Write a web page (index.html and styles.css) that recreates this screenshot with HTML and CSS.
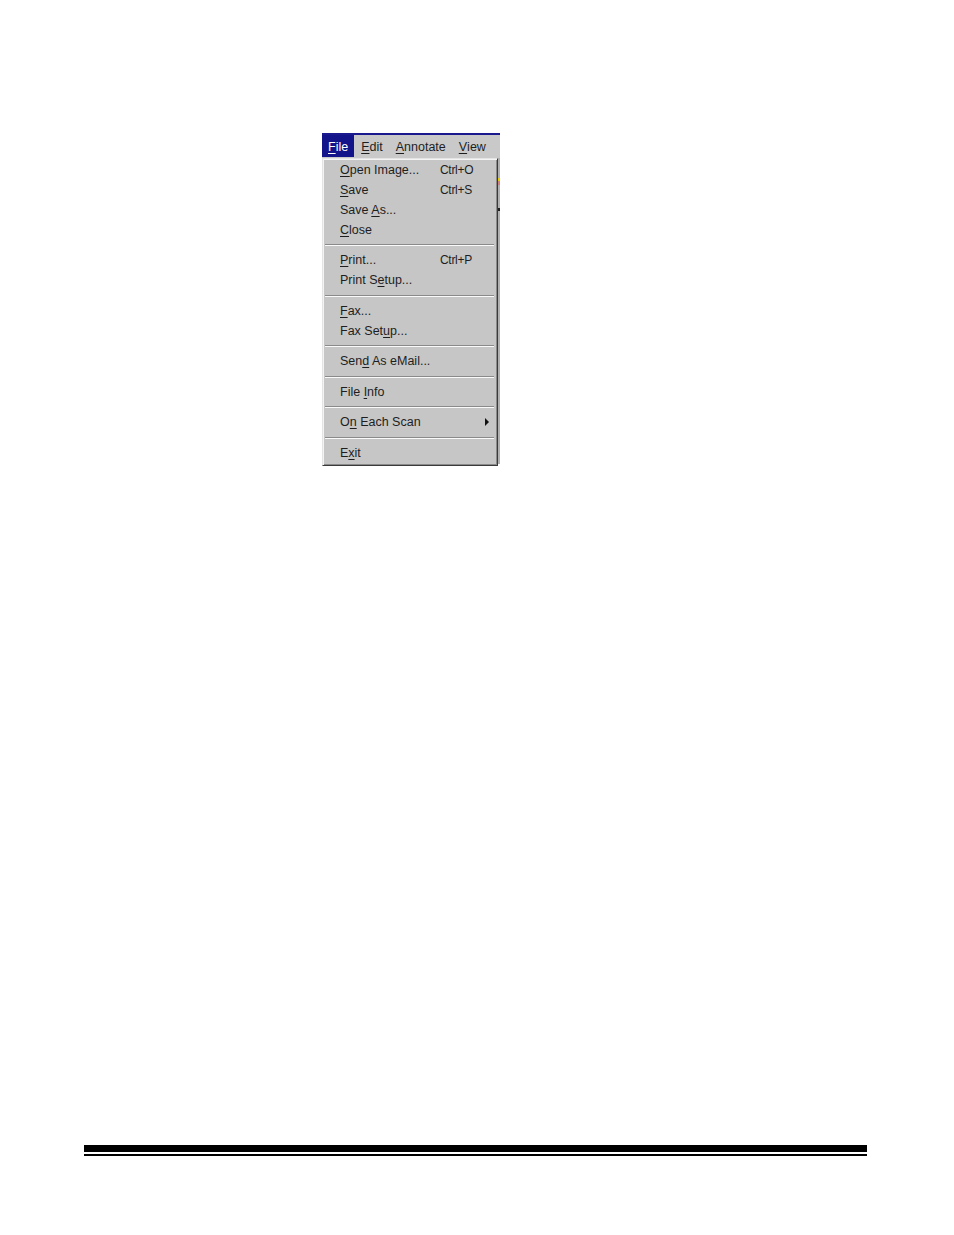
FILE: index.html
```html
<!DOCTYPE html>
<html>
<head>
<meta charset="utf-8">
<link rel="stylesheet" href="styles.css">
</head>
<body>
<div class="page">
  <div class="window">
    <div class="menubar">
      <span class="top active"><u>F</u>ile</span>
      <span class="top"><u>E</u>dit</span>
      <span class="top"><u>A</u>nnotate</span>
      <span class="top"><u>V</u>iew</span>
    </div>
    <div class="below">
      <div class="dropdown">
        <div class="item"><span class="label"><u>O</u>pen Image...</span><span class="key">Ctrl+O</span></div>
        <div class="item"><span class="label"><u>S</u>ave</span><span class="key">Ctrl+S</span></div>
        <div class="item"><span class="label">Save <u>A</u>s...</span></div>
        <div class="item"><span class="label"><u>C</u>lose</span></div>
        <div class="sep"></div>
        <div class="item"><span class="label"><u>P</u>rint...</span><span class="key">Ctrl+P</span></div>
        <div class="item"><span class="label">Print S<u>e</u>tup...</span></div>
        <div class="sep tall"></div>
        <div class="item"><span class="label"><u>F</u>ax...</span></div>
        <div class="item"><span class="label">Fax Set<u>u</u>p...</span></div>
        <div class="sep"></div>
        <div class="item"><span class="label">Sen<u>d</u> As eMail...</span></div>
        <div class="sep tall"></div>
        <div class="item"><span class="label">File <u>I</u>nfo</span></div>
        <div class="sep"></div>
        <div class="item"><span class="label">O<u>n</u> Each Scan</span><span class="arrow"></span></div>
        <div class="sep tall"></div>
        <div class="item"><span class="label">E<u>x</u>it</span></div>
      </div>
      <div class="behind"></div>
    </div>
  </div>
  <div class="footer-rule">
    <div class="thick"></div>
    <div class="thin"></div>
  </div>
</div>
</body>
</html>
```

FILE: styles.css
```css
html, body {
  margin: 0;
  padding: 0;
  background: #ffffff;
}

.page {
  width: 954px;
  height: 1235px;
  padding-top: 133px;
  box-sizing: border-box;
  font-family: "Liberation Sans", Arial, sans-serif;
  font-size: 12.5px;
  color: #1e1e1e;
}

.window {
  width: 178px;
  margin-left: 322px;
}

.menubar {
  display: flex;
  height: 23px;
  border-top: 2px solid #1a1a8e;
  background: #c9c9c9;
}

.top {
  display: flex;
  align-items: center;
  height: 22px;
  box-sizing: border-box;
  padding: 2px 6px 0 6px;
  margin-right: 1px;
}

.top.active {
  background: #14148a;
  color: #ffffff;
}

u {
  text-decoration: underline;
  text-underline-offset: 2px;
  text-decoration-thickness: 1px;
}

.below {
  display: flex;
  align-items: flex-start;
}

.dropdown {
  width: 176px;
  box-sizing: border-box;
  background: #c6c6c6;
  border-top: 1px solid #e4e4e4;
  border-left: 1px solid #e4e4e4;
  border-right: 1px solid #3a3a3a;
  border-bottom: 1px solid #3a3a3a;
  box-shadow: inset 1px 1px 0 #f4f4f4, inset -1px -1px 0 #8a8a8a;
  padding: 1px 0 2px 0;
}

.item {
  display: flex;
  align-items: center;
  height: 20px;
  padding-left: 17px;
  position: relative;
}

.label {
  width: 100px;
  white-space: nowrap;
}

.key {
  white-space: nowrap;
  font-size: 12px;
  letter-spacing: -0.3px;
}

.arrow {
  position: absolute;
  left: 162px;
  top: 6px;
  width: 0;
  height: 0;
  border-top: 4px solid transparent;
  border-bottom: 4px solid transparent;
  border-left: 4px solid #111111;
}

.sep {
  height: 10px;
  display: flex;
  flex-direction: column;
  justify-content: center;
  padding: 0 3px 0 2px;
}

.sep.tall {
  height: 11px;
}

.sep::before {
  content: "";
  display: block;
  height: 1px;
  background: #8a8a8a;
}

.sep::after {
  content: "";
  display: block;
  height: 1px;
  background: #fafafa;
}

.behind {
  width: 2px;
  height: 306px;
  background: linear-gradient(to bottom,
    #b0b0b0 0px, #b0b0b0 20px,
    #e8d000 20px, #e8d000 23px,
    #d08080 23px, #d08080 27px,
    #b0b0b0 27px, #b0b0b0 50px,
    #202020 50px, #202020 53px,
    #b0b0b0 53px, #b0b0b0 306px);
}

.footer-rule {
  width: 783px;
  margin-left: 84px;
  margin-top: 679px;
}

.thick {
  height: 7px;
  background: #000000;
}

.thin {
  height: 2px;
  margin-top: 2px;
  background: #000000;
}
```
